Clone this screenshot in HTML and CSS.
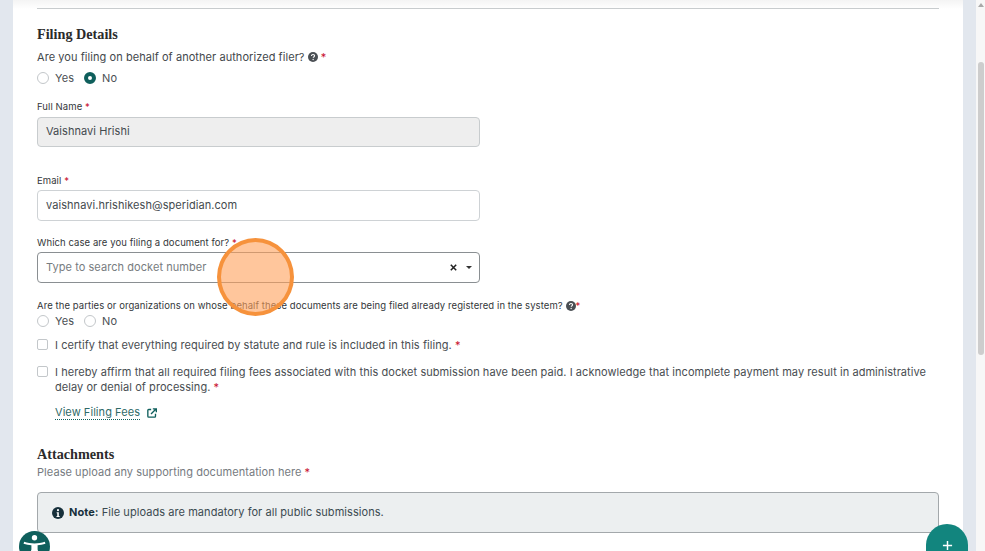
FILE: index.html
```html
<!DOCTYPE html>
<html lang="en">
<head>
<meta charset="utf-8">
<title>Filing Details</title>
<link rel="stylesheet" href="styles.css">
</head>
<body>
<div class="shell">
  <main class="panel">
    <hr class="rule">
    <h2 class="heading first">Filing Details</h2>
    <p class="question">Are you filing on behalf of another authorized filer? <svg class="help" viewBox="0 0 16 16"><circle cx="8" cy="8" r="8" fill="#4a4f54"/><path d="M5.600 6.200c0-1.400 1-2.200 2.400-2.200s2.500.8 2.500 2.100c0 1.900-2.200 1.700-2.200 3.200" fill="none" stroke="#fff" stroke-width="1.800"/><circle cx="8.200" cy="12" r="1.100" fill="#fff"/></svg><span class="req tight">*</span></p>
    <div class="radios">
      <span class="radio"></span><span class="radio-label">Yes</span>
      <span class="radio on"></span><span class="radio-label">No</span>
    </div>
    <label class="label name-label">Full Name <span class="req">*</span></label>
    <div class="input disabled"><span class="value">Vaishnavi Hrishi</span></div>
    <label class="label email-label">Email <span class="req">*</span></label>
    <div class="input email"><span class="value">vaishnavi.hrishikesh@speridian.com</span></div>
    <label class="label case-label">Which case are you filing a document for? <span class="req">*</span></label>
    <div class="input select">
      <span class="value placeholder">Type to search docket number</span>
      <svg class="clear" viewBox="0 0 10 10"><path d="M2 2l6 6M8 2l-6 6" stroke="#222" stroke-width="1.700" fill="none"/></svg>
      <span class="caret"></span>
    </div>
    <p class="label parties">Are the parties or organizations on whose behalf these documents are being filed already registered in the system?
      <svg class="help" viewBox="0 0 16 16"><circle cx="8" cy="8" r="8" fill="#4a4f54"/><path d="M5.600 6.200c0-1.400 1-2.200 2.400-2.200s2.500.8 2.500 2.100c0 1.900-2.200 1.700-2.200 3.200" fill="none" stroke="#fff" stroke-width="1.800"/><circle cx="8.200" cy="12" r="1.100" fill="#fff"/></svg><span class="req">*</span></p>
    <div class="radios second">
      <span class="radio"></span><span class="radio-label">Yes</span>
      <span class="radio"></span><span class="radio-label">No</span>
    </div>
    <div class="check one"><span class="box"></span><span class="check-text">I certify that everything required by statute and rule is included in this filing. <span class="req">*</span></span></div>
    <div class="check two"><span class="box"></span><span class="check-text">I hereby affirm that all required filing fees associated with this docket submission have been paid. I acknowledge that incomplete payment may result in administrative delay or denial of processing. <span class="req">*</span></span></div>
    <div class="fees"><a class="fees-link">View Filing Fees</a>
      <svg class="external" viewBox="0 0 12 12"><path d="M5 1.800H2a1 1 0 0 0-1 1V10a1 1 0 0 0 1 1h7.200a1 1 0 0 0 1-1V7" fill="none" stroke="#0f5f5c" stroke-width="1.600"/><path d="M4.800 7.300L10.500 1.600M7 1h4.200v4.200" fill="none" stroke="#0f5f5c" stroke-width="1.600"/></svg>
    </div>
    <h2 class="heading attach">Attachments</h2>
    <p class="hint">Please upload any supporting documentation here <span class="req">*</span></p>
    <div class="note">
      <svg class="info" viewBox="0 0 16 16"><circle cx="8" cy="8" r="8" fill="#17303b"/><circle cx="8" cy="4.200" r="1.400" fill="#fff"/><path d="M6.200 7h2.900v5h1.100v1.200H6V12h1V8.200H6.200z" fill="#fff"/></svg>
      <span class="value"><b>Note:</b> File uploads are mandatory for all public submissions.</span>
    </div>
  </main>
  <div class="scrollbar">
    <span class="arrow"></span>
    <span class="thumb"></span>
  </div>
</div>
<div class="click-marker"></div>
<div class="a11y">
  <svg viewBox="0 0 30 30"><circle cx="15" cy="15" r="15" fill="#0f5f5c"/><circle cx="15" cy="6.500" r="2.600" fill="#fff"/><path d="M5 10.500c3 1 6.500 1.500 10 1.500s7-.5 10-1.500l.6 1.800c-2.600.9-5.200 1.400-7.600 1.600v4.100l2.800 8.500-1.900.6-2.800-7.600h-2.200l-2.800 7.600-1.900-.6 2.800-8.500v-4.100c-2.400-.2-5-.7-7.600-1.600z" fill="#fff"/></svg>
</div>
<div class="fab"><svg class="plus" viewBox="0 0 12 12"><path d="M6 1v10M1 6h10" stroke="#fff" stroke-width="1.600" fill="none"/></svg></div>
</body>
</html>
```
FILE: styles.css
```css
* { box-sizing: border-box; }
html, body { margin: 0; height: 100%; overflow: hidden; }
body {
  font-family: Inter, "Open Sans", "Liberation Sans", sans-serif;
  color: #43484c;
  background: #fff;
  letter-spacing: 0.06px;
}
.shell {
  display: flex;
  height: 551px;
  background: #e2e7ee;
  padding-left: 13px;
}
.panel {
  width: 950px;
  height: 551px;
  flex: none;
  background: linear-gradient(#f4f4f4 0, #fff 9px);
  padding: 8px 24px 0;
  overflow: hidden;
}
.rule { margin: 0; border: 0; border-top: 1px solid #c8ccce; }
.heading {
  margin: 0;
  font: 700 14.2px/18px "Liberation Serif", "Noto Serif", serif;
  color: #2b2b2b;
  letter-spacing: 0;
}
.first { margin-top: 16px; }
.question { margin: 7px 0 0; font-size: 11px; line-height: 15px; color: #43484c; }
.help { width: 10px; height: 10px; vertical-align: -1px; }
.req { color: #c8102e; }
.tight { margin-left: 3px; }
.radios { display: flex; align-items: center; height: 14px; margin-top: 6px; }
.radio {
  width: 12px; height: 12px; border-radius: 50%;
  border: 1px solid #c3c7ca; background: #fff; flex: none;
}
.radio.on { border: 4px solid #0f5f5c; }
.radio-label { font-size: 11px; color: #4b5054; margin: 0 10px 0 6px; }
.label { display: block; font-size: 9.500px; line-height: 12px; color: #33373a; margin: 0; letter-spacing: 0.08px; }
.name-label { margin-top: 16px; }
.email-label { margin-top: 28px; }
.case-label { margin-top: 16px; }
.input {
  display: flex; align-items: center;
  width: 443px; height: 31px;
  margin-top: 4px; padding: 0 5px 0 8px;
  border: 1px solid #ced2d5; border-radius: 4px;
  font-size: 11px; color: #444a4e;
}
.value { padding-bottom: 2px; }
.disabled { height: 30px; background: #eeeeee; border-color: #c8ccce; }
.email { margin-top: 3px; }
.select { border-color: #8a8f92; height: 31px; margin-top: 3px; }
.placeholder { color: #777c80; flex: 1; }
.clear { width: 9px; height: 9px; margin-right: 8px; }
.caret {
  width: 0; height: 0; margin: 0 2px 0 0;
  border: 3px solid transparent; border-top: 3px solid #333; border-bottom: 0;
}
.parties { margin-top: 17px; }
.parties .help { vertical-align: -1.500px; }
.second { margin-top: 2px; }
.check { display: flex; align-items: flex-start; gap: 7px; font-size: 11px; line-height: 15px; color: #484d51; }
.one { margin-top: 10px; }
.two { margin-top: 12px; }
.box {
  width: 11px; height: 11px; flex: none; margin-top: 1px;
  border: 1px solid #c3c7ca; border-radius: 2px; background: #fff;
}
.check-text { flex: 1; }
.fees { display: flex; align-items: center; gap: 7px; margin: 11px 0 0 18px; font-size: 11px; height: 14px; }
.fees-link { color: #2f6a68; border-bottom: 1px dotted #0f5f5c; line-height: 13px; }
.external { width: 10px; height: 10px; }
.attach { margin-top: 25px; }
.hint { margin: 2px 0 0; font-size: 11px; line-height: 14px; color: #767b7f; }
.note {
  display: flex; align-items: center; gap: 5px;
  margin-top: 13px; height: 41px; padding: 0 14px;
  background: #eceff0; border: 1px solid #a3a8ab; border-radius: 4px;
  font-size: 11px; color: #3b4a50;
}
.note b { color: #17303b; }
.info { width: 12px; height: 12px; flex: none; }
.scrollbar {
  position: relative;
  width: 9px; height: 551px; margin-left: 13px; flex: none;
  background: #f7f7f7;
}
.arrow {
  position: absolute; left: 2px; top: 3px;
  border: 3px solid transparent; border-bottom: 4px solid #a9a9a9; border-top: 0;
}
.thumb {
  position: absolute; left: 2px; top: 62px;
  width: 6px; height: 293px; border-radius: 3px; background: #cdcdcd;
}
.click-marker {
  position: absolute; left: 217px; top: 238px;
  width: 77px; height: 78px; border-radius: 50%;
  background: rgba(255, 160, 90, 0.6);
  border: 4px solid #f6923c;
}
.a11y { position: absolute; left: 19px; top: 531px; width: 31px; height: 20px; overflow: hidden; }
.a11y svg { display: block; width: 31px; height: 31px; }
.fab {
  position: absolute; left: 926px; top: 524px;
  width: 42px; height: 27px; border-radius: 21px 21px 0 0;
  background: #12857e;
  display: flex; justify-content: center; padding-top: 16px;
}
.plus { width: 11px; height: 11px; }
```
